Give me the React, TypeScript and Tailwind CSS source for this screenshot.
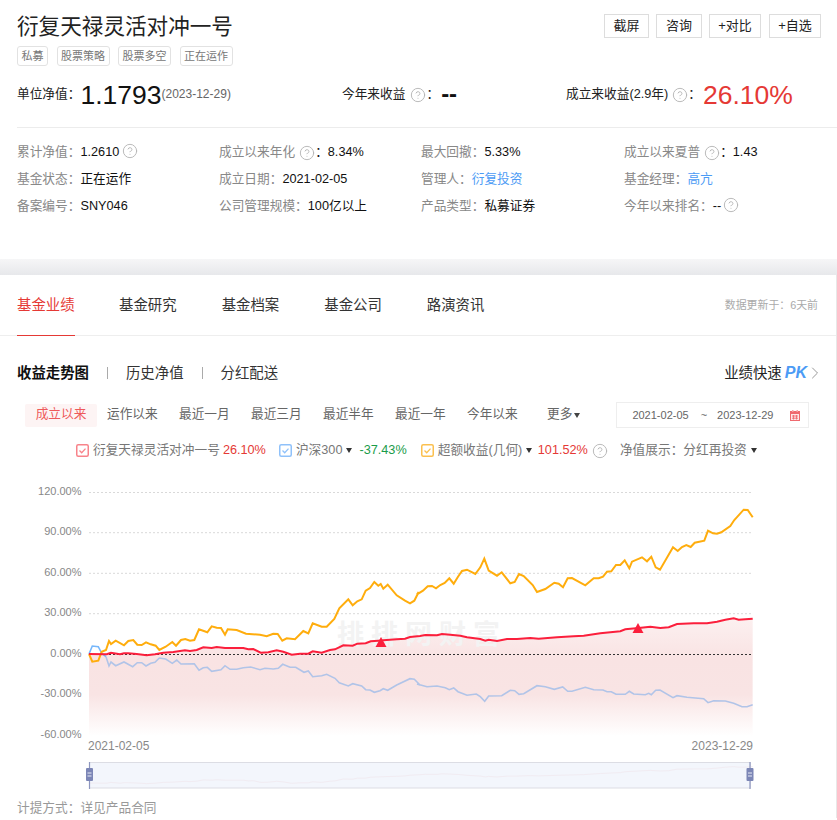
import { CircleHelp, ChevronRight } from "lucide-react";

type Pt = [number, number];

// points read off the chart, in 3x crop coordinates (left half / right half)
const yellowL: Pt[] = [[267,552],[277,575],[295,572],[305,545],[318,540],[327,513],[333,522],[347,512],[372,526],[385,513],[400,510],[412,524],[425,525],[438,517],[452,523],[467,527],[478,540],[497,530],[517,516],[528,527],[543,510],[556,507],[570,512],[583,510],[597,478],[622,487],[635,469],[650,473],[663,474],[675,494],[683,478],[710,480],[738,491],[780,494],[800,499],[820,491],[833,492],[847,512],[860,505],[885,508],[910,483],[925,490],[938,460],[965,470],[980,470],[1003,447],[1018,415],[1045,388],[1058,406],[1072,394],[1085,388],[1097,362],[1110,354],[1123,336],[1135,347],[1142,342],[1150,356],[1163,344],[1190,376],[1215,392],[1230,400],[1243,392],[1256,366]];
const yellowR: Pt[] = [[0,373],[18,362],[32,349],[45,348],[57,355],[70,345],[83,339],[97,325],[110,341],[123,320],[135,303],[150,299],[175,312],[190,292],[202,266],[215,302],[240,317],[254,307],[280,340],[293,336],[306,312],[320,318],[347,345],[360,366],[385,357],[412,338],[425,341],[438,352],[452,325],[465,324],[505,346],[530,325],[545,325],[558,320],[570,305],[583,304],[597,285],[610,285],[623,271],[637,295],[645,275],[675,262],[690,274],[703,260],[716,292],[729,299],[768,232],[782,243],[795,231],[808,225],[821,231],[833,218],[862,212],[873,182],[888,190],[900,191],[913,187],[940,168],[952,150],[980,119],[992,120],[1007,142]];
const redL: Pt[] = [[267,552],[320,553],[333,548],[360,553],[372,550],[385,550],[410,552],[440,556],[465,553],[490,548],[520,546],[555,541],[570,543],[590,540],[610,532],[635,534],[650,531],[675,534],[730,534],[745,538],[760,537],[782,548],[805,547],[830,541],[850,545],[875,554],[900,551],[925,551],[938,544],[965,548],[990,540],[1005,538],[1030,526],[1058,527],[1072,521],[1097,520],[1112,514],[1135,512],[1150,511],[1190,508],[1215,506],[1230,501],[1260,498]];
const redR: Pt[] = [[25,495],[60,496],[75,492],[100,494],[130,497],[150,502],[190,507],[205,512],[215,509],[240,513],[270,507],[300,507],[340,504],[365,506],[420,502],[470,499],[500,497],[550,490],[610,484],[625,478],[665,474],[700,470],[730,474],[755,472],[780,462],[830,460],[870,460],[900,455],[925,449],[950,445],[965,449],[985,448],[1007,446]];
const blueStart: Pt[] = [[267,552],[277,528],[295,530],[305,550],[318,560]];
const blueL: Pt[] = [[318,560],[327,588],[333,576],[347,587],[372,576],[398,590],[412,578],[425,578],[438,588],[452,580],[465,577],[478,564],[497,567],[517,580],[530,570],[543,582],[583,581],[597,601],[610,593],[622,592],[635,604],[663,599],[675,587],[690,598],[710,598],[730,593],[752,591],[780,599],[795,595],[820,597],[835,595],[848,583],[870,592],[887,592],[912,607],[925,603],[938,620],[965,617],[980,613],[1005,625],[1018,638],[1045,648],[1058,641],[1085,648],[1097,659],[1110,660],[1123,667],[1140,662],[1150,656],[1163,661],[1190,645],[1230,626],[1243,628],[1260,645]];
const blueR: Pt[] = [[0,642],[30,650],[60,648],[85,653],[97,659],[110,654],[123,665],[150,676],[178,672],[190,680],[203,694],[215,678],[254,677],[280,661],[293,662],[306,673],[320,671],[360,647],[385,650],[412,658],[437,651],[452,664],[465,664],[505,652],[530,659],[558,660],[570,665],[583,665],[597,673],[625,673],[637,664],[650,672],[685,674],[695,670],[703,674],[716,661],[729,660],[768,683],[780,677],[810,682],[860,686],[873,698],[890,692],[925,693],[950,700],[975,710],[990,710],[1007,704]];

const left = (p: Pt[]): Pt[] => p.map(([x, y]) => [x / 3, 470 + y / 3]);
const right = (p: Pt[]): Pt[] => p.map(([x, y]) => [417 + x / 3, 470 + y / 3]);
const str = (p: Pt[]) => p.map(([x, y]) => `${x.toFixed(1)},${y.toFixed(1)}`).join(" ");

const yellow = [...left(yellowL), ...right(yellowR)];
const red = [...left(redL), ...right(redR)];
const blue = [...left(blueL), ...right(blueR)];
const area: Pt[] = [...red, [752.6, 736], [89, 736]];
const mini: Pt[] = red.map(([x, y]) => [x, 783 - (654 - y) * 0.46]);

const grid = [
  { y: 492.5, label: "120.00%" },
  { y: 532.7, label: "90.00%" },
  { y: 573.3, label: "60.00%" },
  { y: 613.7, label: "30.00%" },
  { y: 654, label: "0.00%" },
  { y: 694.5, label: "-30.00%" },
  { y: 735.5, label: "-60.00%" },
];

function Help({ className = "" }: { className?: string }) {
  return <CircleHelp size={16} strokeWidth={1.4} className={`shrink-0 text-[#b5b5b5] ${className}`} />;
}

function Caret({ className = "" }: { className?: string }) {
  return <span className={`inline-block h-0 w-0 shrink-0 border-x-[3.5px] border-t-[5px] border-x-transparent border-t-[#333] ${className}`} />;
}

function Check({ color, className = "" }: { color: string; className?: string }) {
  return (
    <svg width="13" height="13" viewBox="0 0 13 13" className={`shrink-0 ${className}`}>
      <rect x="0.75" y="0.75" width="11.5" height="11.5" rx="1.5" fill="#fff" stroke={color} strokeWidth="1.5" />
      <polyline points="3.5,6.5 5.7,8.7 9.5,4.6" fill="none" stroke={color} strokeWidth="1.3" />
    </svg>
  );
}

function Calendar() {
  return (
    <svg width="10" height="11" viewBox="0 0 10 11" className="ml-auto mr-[8px]">
      <rect x="0.5" y="1.5" width="9" height="9" fill="#fde8e8" stroke="#ef6a6f" />
      <rect x="0" y="1" width="10" height="3" fill="#ef6a6f" />
      <rect x="2" y="0" width="1.5" height="2" fill="#f7a5a8" />
      <rect x="6.5" y="0" width="1.5" height="2" fill="#f7a5a8" />
      <path d="M2 6h6M2 8.2h6M3.5 5v4.5M6.5 5v4.5" stroke="#ef6a6f" strokeWidth="0.9" />
    </svg>
  );
}

function Tag({ children }: { children: React.ReactNode }) {
  return (
    <span className="flex h-[20px] items-center rounded-[3px] border border-[#e2e2e2] px-[3.5px] text-[11px] text-[#777]">
      {children}
    </span>
  );
}

function ActionButton({ children, className }: { children: React.ReactNode; className: string }) {
  return (
    <button className={`flex h-[24px] items-center justify-center border border-[#ddd] text-[13px] text-[#222] ${className}`}>
      {children}
    </button>
  );
}

function Info({ label, children }: { label: string; children: React.ReactNode }) {
  return (
    <div className="flex h-[27px] items-center text-[12.7px] text-[#111]">
      <span className="text-[#888]">{label}</span>
      {children}
    </div>
  );
}

function Chart() {
  return (
    <svg width="837" height="325" viewBox="0 470 837 325" className="block">
      <defs>
        <linearGradient id="fill" gradientUnits="userSpaceOnUse" x1="0" y1="618" x2="0" y2="736">
          <stop offset="0" stopColor="#fcf0f0" />
          <stop offset="0.35" stopColor="#f9e3e3" />
          <stop offset="0.65" stopColor="#f9e4e4" />
          <stop offset="1" stopColor="#ffffff" />
        </linearGradient>
      </defs>
      {grid.map((g) => (
        <g key={g.label}>
          {g.y !== 654 && <line x1="89" x2="752" y1={g.y} y2={g.y} stroke="#d9d9d9" strokeDasharray="2 2" />}
          <text x="81.5" y={g.y + 2.5} textAnchor="end" fontSize="11" fill="#888">
            {g.label}
          </text>
        </g>
      ))}
      <polygon points={str(area)} fill="url(#fill)" />
      <text x="337" y="644" fontSize="27" fontWeight="700" fill="#f3f3f3" letterSpacing="7">
        排排网财富
      </text>
      <line x1="89" x2="752" y1="654.5" y2="654.5" stroke="#333" strokeDasharray="2 2" />
      <polyline points={str(left(blueStart))} fill="none" stroke="#76b7fb" strokeWidth="1.6" />
      <polyline points={str(blue)} fill="none" stroke="#b1c4e8" strokeWidth="1.6" />
      <polyline points={str(yellow)} fill="none" stroke="#ffad0d" strokeWidth="2" />
      <polyline points={str(red)} fill="none" stroke="#fb1f3c" strokeWidth="2" />
      <polygon points="381,637 375.5,647 386.5,647" fill="#fb1f3c" />
      <polygon points="638,623 632.5,633 643.5,633" fill="#fb1f3c" />
      <text x="88" y="750" fontSize="12" fill="#888">2021-02-05</text>
      <text x="753" y="750" fontSize="12" textAnchor="end" fill="#888">2023-12-29</text>
      <rect x="89.5" y="762.5" width="661" height="25.5" fill="#f3f6fc" stroke="#dcdde4" />
      <polyline points={str(mini)} fill="none" stroke="#f1ecf2" strokeWidth="1" />
      {[89.5, 750].map((x) => (
        <g key={x}>
          <line x1={x} x2={x} y1="762" y2="789" stroke="#8d96bf" strokeWidth="1.2" />
          <rect x={x - 3.5} y="768" width="7" height="13" rx="1" fill="#7c86b6" />
          <path d={`M${x - 2} 773h4M${x - 2} 776h4`} stroke="#e6e9f5" />
        </g>
      ))}
    </svg>
  );
}

export default function App() {
  return (
    <div className="h-[820px] w-[837px] overflow-hidden bg-white [font-family:'Liberation_Sans','Noto_Sans_CJK_SC',sans-serif]">
      <header className="h-[259px] pl-[17px] pt-[14px]">
        <div className="flex items-start justify-between pr-[16px]">
          <h1 className="text-[21.6px] leading-[25px] text-[#222]">衍复天禄灵活对冲一号</h1>
          <div className="flex">
            <ActionButton className="w-[45px]">截屏</ActionButton>
            <ActionButton className="ml-[7px] w-[46px]">咨询</ActionButton>
            <ActionButton className="ml-[7px] w-[52px]">+对比</ActionButton>
            <ActionButton className="ml-[8px] w-[52px]">+自选</ActionButton>
          </div>
        </div>
        <div className="mt-[7px] flex gap-[8.5px]">
          <Tag>私募</Tag>
          <Tag>股票策略</Tag>
          <Tag>股票多空</Tag>
          <Tag>正在运作</Tag>
        </div>
        <div className="mt-[13px] flex h-[32px] items-center text-[12.7px] text-[#222]">
          <div className="flex w-[325px] items-center">
            <span>单位净值：</span>
            <span className="text-[26.5px] leading-none text-[#111]">1.1793</span>
            <span className="-mt-[3px] text-[12px] text-[#666]">(2023-12-29)</span>
          </div>
          <div className="flex w-[224px] items-center">
            <span>今年来收益</span>
            <Help className="ml-[5px]" />
            <span>：</span>
            <span className="ml-[2px] -mt-[3px] text-[24px] font-bold leading-none text-[#111]">--</span>
          </div>
          <div className="flex items-center">
            <span>成立来收益(2.9年)</span>
            <Help className="ml-[4px]" />
            <span>：</span>
            <span className="ml-[2px] text-[26.5px] leading-none text-[#e53935]">26.10%</span>
          </div>
        </div>
        <div className="mt-[16px] border-t border-[#ececec] pt-[11px]">
          <div className="grid grid-cols-[202px_202px_203px_1fr]">
            <Info label="累计净值：">
              <span>1.2610</span>
              <Help className="ml-[3px] -mt-[3px]" />
            </Info>
            <Info label="成立以来年化">
              <Help className="ml-[4px]" />
              <span>：</span>
              <span>8.34%</span>
            </Info>
            <Info label="最大回撤：">5.33%</Info>
            <Info label="成立以来夏普">
              <Help className="ml-[4px]" />
              <span>：</span>
              <span>1.43</span>
            </Info>
            <Info label="基金状态：">正在运作</Info>
            <Info label="成立日期：">2021-02-05</Info>
            <Info label="管理人：">
              <span className="text-[#4c9bf5]">衍复投资</span>
            </Info>
            <Info label="基金经理：">
              <span className="text-[#4c9bf5]">高亢</span>
            </Info>
            <Info label="备案编号：">SNY046</Info>
            <Info label="公司管理规模：">100亿以上</Info>
            <Info label="产品类型：">私募证券</Info>
            <Info label="今年以来排名：">
              <span>--</span>
              <Help className="ml-[2px] -mt-[3px]" />
            </Info>
          </div>
        </div>
      </header>

      <div className="h-[16px] bg-gradient-to-b from-[#f6f6f7] to-[#e7e8eb]" />

      <section className="border-r border-[#e8e8e8]">
        <nav className="flex h-[61px] items-stretch border-b border-[#eee] pl-[17px] pr-[18px] pt-px text-[14.4px]">
          <a className="-mb-px flex items-center border-b border-[#e53935] text-[#e53935]">基金业绩</a>
          <a className="ml-[44.5px] flex items-center text-[#333]">基金研究</a>
          <a className="ml-[45px] flex items-center text-[#333]">基金档案</a>
          <a className="ml-[45px] flex items-center text-[#333]">基金公司</a>
          <a className="ml-[45px] flex items-center text-[#333]">路演资讯</a>
          <span className="ml-auto flex items-center text-[10.9px] text-[#aaa]">数据更新于：6天前</span>
        </nav>

        <div className="flex h-[65px] items-start pl-[17px] pr-[11px] pt-[27px] text-[14.4px] leading-[20px] text-[#333]">
          <span className="font-bold text-[#111]">收益走势图</span>
          <span className="mx-[18px] mt-[4px] h-[12px] w-px bg-[#aaa]" />
          <span>历史净值</span>
          <span className="mx-[18px] mt-[4px] h-[12px] w-px bg-[#aaa]" />
          <span>分红配送</span>
          <span className="ml-auto text-[#222]">业绩快速</span>
          <span className="ml-[3px] text-[16px] font-bold italic text-[#4c9bf5]">PK</span>
          <ChevronRight size={20} strokeWidth={1.2} className="-ml-[2px] text-[#999]" />
        </div>

        <div className="flex h-[28px] items-center pl-[25px] text-[12.7px] text-[#666]">
          <span className="flex h-[23px] w-[72px] items-center justify-center rounded-[2px] bg-[#fdf4f4] text-[#ee5a5a]">成立以来</span>
          <span className="ml-[10px] w-[72px]">运作以来</span>
          <span className="w-[72px]">最近一月</span>
          <span className="w-[72px]">最近三月</span>
          <span className="w-[72px]">最近半年</span>
          <span className="w-[72px]">最近一年</span>
          <span className="w-[80px]">今年以来</span>
          <span>更多</span>
          <Caret className="ml-[2px] border-t-[#444]" />
          <div className="ml-[36px] flex h-[26px] w-[193px] items-center border border-[#eee] pl-[15px] text-[11px]">
            <span>2021-02-05</span>
            <span className="ml-[12px]">~</span>
            <span className="ml-[10px]">2023-12-29</span>
            <Calendar />
          </div>
        </div>

        <div className="flex h-[41px] items-center pl-[76px] pt-[2px] text-[12.7px] text-[#777]">
          <Check color="#f8838a" />
          <span className="ml-[4px]">衍复天禄灵活对冲一号</span>
          <span className="ml-[3px] text-[#e53935]">26.10%</span>
          <Check color="#8fc1fa" className="ml-[13px]" />
          <span className="ml-[4px]">沪深300</span>
          <Caret className="ml-[4px]" />
          <span className="ml-[7px] text-[#1a9c4a]">-37.43%</span>
          <Check color="#fbc04f" className="ml-[14px]" />
          <span className="ml-[4px]">超额收益(几何)</span>
          <Caret className="ml-[3.5px]" />
          <span className="ml-[6px] text-[#e53935]">101.52%</span>
          <Help className="ml-[4px]" />
          <span className="ml-[12px]">净值展示：分红再投资</span>
          <Caret className="ml-[4px]" />
        </div>

        <Chart />

        <p className="pl-[17px] pt-[4px] text-[12.7px] text-[#999]">计提方式：详见产品合同</p>
      </section>
    </div>
  );
}
